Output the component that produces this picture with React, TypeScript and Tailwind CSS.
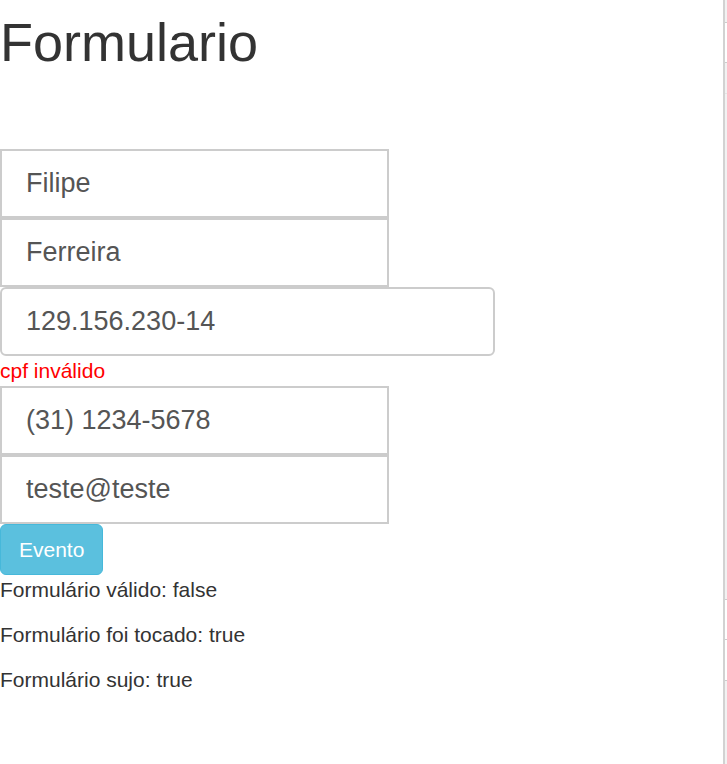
import React from 'react';

const font = { fontFamily: '"Liberation Sans", Arial, Helvetica, sans-serif' };

function Field({ value, wide }: { value: string; wide?: boolean }) {
  return (
    <input
      type="text"
      defaultValue={value}
      className={
        wide
          ? 'block w-[495px] h-[69px] border-2 border-[#ccc] rounded-[6px] px-[24px] text-[27px] text-[#555] bg-white outline-none'
          : 'block w-[389px] h-[69px] border-2 border-[#ccc] px-[24px] text-[27px] text-[#555] bg-white outline-none'
      }
    />
  );
}

export default function App() {
  return (
    <div className="flex w-[727px] h-[764px] bg-white overflow-hidden" style={font}>
      {/* main column */}
      <div className="w-[723px] shrink-0">
        <h1 className="mt-[13px] mb-[77px] text-[54px] leading-[1.1] font-medium text-[#333]">Formulario</h1>

        <form>
          <Field value="Filipe" />
          <Field value="Ferreira" />
          <Field value="129.156.230-14" wide />
          <div className="text-[21px] leading-[30px] text-[red]">cpf inválido</div>
          <Field value="(31) 1234-5678" />
          <Field value="teste@teste" />
          <button
            type="button"
            className="h-[51px] px-[18px] text-[21px] text-white bg-[#5bc0de] border border-[#46b8da] rounded-[6px]"
          >
            Evento
          </button>
        </form>

        <div className="text-[21px] leading-[30px] text-[#333]">
          <p className="mb-[15px]">Formulário válido: false</p>
          <p className="mb-[15px]">Formulário foi tocado: true</p>
          <p className="mb-[15px]">Formulário sujo: true</p>
        </div>
      </div>

      {/* divider and clipped neighbour panel */}
      <div className="w-[2px] shrink-0 bg-[#d2d2d2]" />
      <div className="w-[2px] shrink-0 flex flex-col bg-[#f2f2f2]">
        <div className="h-[22px]" />
        <div className="h-[41px] bg-white border-y border-[#ccc]" />
        <div className="h-[30px]" />
        <div className="h-px bg-[#e4e4e4]" />
        <div className="h-[505px]" />
        <div className="h-[41px] bg-white border-y border-[#ccc]" />
        <div className="h-[41px] bg-white border-b border-[#ccc]" />
      </div>
    </div>
  );
}
